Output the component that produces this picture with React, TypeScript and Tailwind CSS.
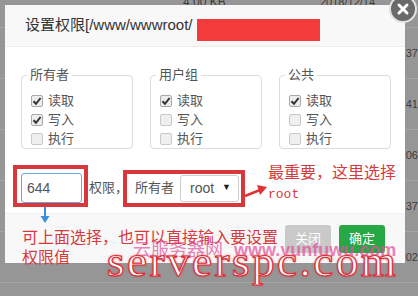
import React from "react";

const sans = "font-['Liberation_Sans','Noto_Sans_CJK_SC',sans-serif]";

function Box({ checked }: { checked: boolean }) {
  return (
    <span
      className={
        "flex h-[12px] w-[12px] items-center justify-center rounded-[2px] border " +
        (checked ? "border-[#a9a9a9] bg-[#ececec]" : "border-[#c8c8c8] bg-[#efefef]")
      }
    >
      {checked && (
        <svg width="10" height="10" viewBox="0 0 10 10">
          <path d="M1.5 5.2 L4 7.8 L8.6 2" fill="none" stroke="#333" strokeWidth="2" />
        </svg>
      )}
    </span>
  );
}

function Group({ title, checks }: { title: string; checks: boolean[] }) {
  const labels = ["读取", "写入", "执行"];
  return (
    <fieldset className="w-[112px] rounded-[4px] border border-[#dcdcdc] px-[5px]">
      <legend className="px-[3px] text-[13px] leading-[16px] text-[#555]">{title}</legend>
      <div className="mt-[8px] flex flex-col pl-[4px]">
        {labels.map((l, i) => (
          <div key={l} className="flex h-[19px] items-center gap-[5px] text-[13px] text-[#555]">
            <Box checked={checks[i]} />
            <span>{l}</span>
          </div>
        ))}
      </div>
    </fieldset>
  );
}

export default function App() {
  const rows = ["", ":37", ":41", ":06", ":37", ":02", ":18"];
  return (
    <div className={"relative h-[296px] w-[418px] overflow-hidden bg-[#969696] " + sans}>
      {/* background table */}
      <div className="-mt-[23px] flex flex-col">
        {rows.map((t, i) => (
          <div key={i} className="flex h-[51px] shrink-0 items-center border-b border-[#a4a4a4] text-[11px] text-[#3c3c3c]">
            <span className="ml-[183px] w-[137px] text-[12px]">{i === 0 ? "4.00 KB" : "4.00 KB"}</span>
            <span className="whitespace-nowrap">{i === 0 ? "2018/12/14" : "2018/12/14 10:23" + t}</span>
          </div>
        ))}
      </div>

      {/* dialog */}
      <div className="absolute left-[5px] top-[5px] flex h-[258px] w-[400px] flex-col bg-white">
        <div className="flex h-[42px] shrink-0 items-center border-b border-[#ececec] bg-[#f8f8f8] pl-[20px] text-[15px] text-[#333]">
          <span>设置权限[/www/wwwroot/</span>
          <span className="ml-[4px] mt-[8px] h-[22px] w-[123px] bg-[#f43b3b]" />
        </div>
        <div className="flex h-[166px] shrink-0 flex-col pl-[16px] pt-[20px]">
          <div className="flex gap-[17px]">
            <Group title="所有者" checks={[true, true, false]} />
            <Group title="用户组" checks={[true, false, false]} />
            <Group title="公共" checks={[true, false, false]} />
          </div>
          <div className="mt-[24px] flex h-[30px] items-center">
            <div className="flex h-[30px] w-[61px] items-center rounded-[3px] border border-[#66a7e0] pl-[5px] text-[14px] text-[#555]">
              644
            </div>
            <span className="ml-[7px] text-[13px] text-[#555]">权限，</span>
            <span className="ml-[7px] text-[13px] text-[#555]">所有者</span>
            <div className="ml-[6px] flex h-[27px] w-[59px] items-center justify-between rounded-[3px] border border-[#cfcfcf] pl-[9px] pr-[7px] text-[14px] text-[#555]">
              <span>root</span>
              <span className="text-[9px] text-[#222]">▼</span>
            </div>
          </div>
        </div>
        <div className="flex flex-1 items-center justify-end gap-[8px] border-t border-[#f0f0f0] bg-[#f8f8f8] pr-[20px]">
          <div className="flex h-[28px] w-[46px] items-center justify-center rounded-[3px] bg-[#c9c9c9] text-[13px] text-white">
            关闭
          </div>
          <div className="flex h-[28px] w-[46px] items-center justify-center rounded-[3px] bg-[#28a745] text-[13px] text-white">
            确定
          </div>
        </div>
      </div>

      {/* close button */}
      <div className="absolute left-[389px] top-[-5px] flex h-[28px] w-[28px] items-center justify-center rounded-full border-2 border-[#e2e2e2] bg-[#6a6a6a]">
        <svg width="14" height="14" viewBox="0 0 14 14">
          <path d="M3 3 L11 11 M11 3 L3 11" stroke="#fff" strokeWidth="3" strokeLinecap="round" />
        </svg>
      </div>

      {/* annotation boxes */}
      <div className="absolute left-[13px] top-[165px] h-[42px] w-[75px] border-4 border-[#d8383b]" />
      <div className="absolute left-[123px] top-[170px] h-[37px] w-[122px] border-4 border-[#d8383b]" />

      {/* arrows */}
      <svg className="absolute left-[38px] top-[206px]" width="14" height="18" viewBox="0 0 14 18">
        <path d="M7 1 L7 11" stroke="#3b8ede" strokeWidth="2" />
        <path d="M2.5 10 L11.5 10 L7 17 Z" fill="#3b8ede" />
      </svg>
      <svg className="absolute left-[243px] top-[182px]" width="26" height="18" viewBox="0 0 26 18">
        <path d="M2 14 L17 8" stroke="#e03434" strokeWidth="2.5" />
        <path d="M14 3 L24 5 L17 13 Z" fill="#e03434" />
      </svg>

      <div className="absolute left-[268px] top-[163px] text-[16px] leading-[20px] text-[#d53a3c]">
        <div>最重要，这里选择</div>
        <div className="font-['Liberation_Mono',monospace] text-[13px] leading-[24px]">root</div>
      </div>

      <div className="absolute left-[22px] top-[228px] whitespace-nowrap text-[16px] leading-[20px] text-[#d53a3c]">
        可上面选择，也可以直接输入要设置
        <br />
        权限值
      </div>

      {/* watermarks */}
      <div className="absolute left-[133px] top-[240px] whitespace-nowrap text-[18px] leading-[20px] text-[#e0509c] opacity-70">
        云服务器网 <span className="ml-[6px] font-bold">www.yunfuwu.com</span>
      </div>
      <div className="absolute left-[107px] top-[239px] whitespace-nowrap font-['Liberation_Serif',serif] text-[45px] leading-[45px] tracking-[2.5px] text-white [-webkit-text-stroke:1.2px_#d8303a] [text-shadow:0_0_3px_#e04050,0_0_1px_#e04050]">
        serverspc.com
      </div>
    </div>
  );
}
